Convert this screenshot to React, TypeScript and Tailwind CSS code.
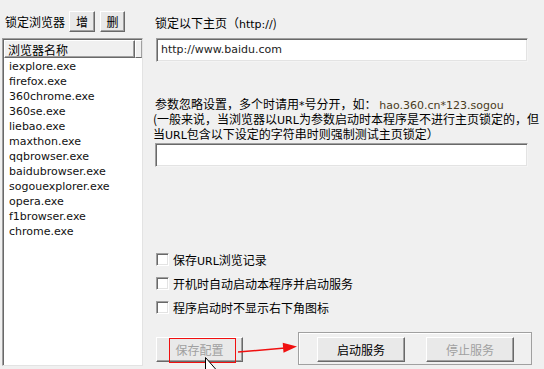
import React from "react";

const cjk = "font-['Noto_Sans_CJK_SC',sans-serif] text-[12px]";
const lat = "font-['DejaVu_Sans',sans-serif] text-[11px]";

function WinButton({
  children,
  className = "",
  disabled = false,
}: {
  children: React.ReactNode;
  className?: string;
  disabled?: boolean;
}) {
  return (
    <div
      className={
        "shrink-0 flex items-center justify-center bg-[#e9e9e9] border border-t-white border-l-white border-r-[#696969] border-b-[#696969] shadow-[inset_-1px_-1px_0_#a0a0a0] " +
        (disabled ? "text-[#a0a0a0] " : "text-black ") +
        className
      }
    >
      {children}
    </div>
  );
}

function CheckRow({ children }: { children: React.ReactNode }) {
  return (
    <div className="h-[24px] flex items-center">
      <div className="ml-[1px] w-[13px] h-[13px] bg-white border border-t-[#a0a0a0] border-l-[#a0a0a0] border-r-white border-b-white shadow-[inset_1px_1px_0_#696969,inset_-1px_-1px_0_#e3e3e3]" />
      <div className={"ml-[4px] h-[15px] leading-[15px] text-black whitespace-nowrap " + cjk}>{children}</div>
    </div>
  );
}

function TextBox({ children }: { children?: React.ReactNode }) {
  return (
    <div className="h-[24px] bg-white border border-t-[#a0a0a0] border-l-[#a0a0a0] border-r-[#f4f4f4] border-b-[#f4f4f4] shadow-[inset_1px_1px_0_#696969,inset_-1px_-1px_0_#e3e3e3] flex items-center pl-[4px]">
      {children}
    </div>
  );
}

const browsers = [
  "iexplore.exe",
  "firefox.exe",
  "360chrome.exe",
  "360se.exe",
  "liebao.exe",
  "maxthon.exe",
  "qqbrowser.exe",
  "baidubrowser.exe",
  "sogouexplorer.exe",
  "opera.exe",
  "f1browser.exe",
  "chrome.exe",
];

export default function App() {
  return (
    <div className="relative w-[544px] h-[369px] bg-[#f0f0f0] overflow-hidden flex text-black">
      {/* left column */}
      <div className="w-[143px] shrink-0 pl-[2px] pb-[3px] flex flex-col">
        <div className="h-[38px] flex items-start pt-[11px] pl-[3px]">
          <div className={"leading-[21px] h-[21px] " + cjk}>锁定浏览器</div>
          <WinButton className={"ml-[4px] w-[26px] h-[21px] " + cjk}>增</WinButton>
          <WinButton className={"ml-[5px] w-[25px] h-[21px] " + cjk}>删</WinButton>
        </div>
        <div className="flex-1 bg-white border border-t-[#a0a0a0] border-l-[#a0a0a0] border-r-[#e3e3e3] border-b-[#e3e3e3] shadow-[inset_1px_1px_0_#696969] pl-[1px] pt-[1px] flex flex-col">
          <div className="h-[18px] flex">
            <div className="w-[131px] h-full bg-[#f0f0f0] border border-t-white border-l-white border-r-[#696969] border-b-[#696969] shadow-[inset_-1px_-1px_0_#a0a0a0] flex items-center pl-[3px]">
              <span className={"leading-[15px] " + cjk}>浏览器名称</span>
            </div>
            <div className="flex-1 h-full bg-[#f0f0f0] border border-t-white border-l-white border-r-[#a0a0a0] border-b-[#696969]" />
          </div>
          <div className="pt-[1px] pl-[5px]">
            {browsers.map((b) => (
              <div key={b} className={"leading-[15px] h-[15px] text-[#111] " + lat}>
                {b}
              </div>
            ))}
          </div>
        </div>
      </div>

      {/* right column */}
      <div className="flex-1 min-w-0 pl-[12px] pr-[16px] pt-[15px] flex flex-col">
        <div className={"h-[15px] leading-[15px] whitespace-nowrap " + cjk}>
          锁定以下主页（<span className={lat}>http://</span>)
        </div>
        <div className="mt-[8px] ml-[1px]">
          <TextBox>
            <span className={"text-[#222] " + lat}>http://www.baidu.com</span>
          </TextBox>
        </div>
        <div className={"mt-[34px] whitespace-nowrap " + cjk}>
          <div className="h-[15px] leading-[15px]">
            参数忽略设置，多个时请用<span className={lat}>*</span>号分开，如：{" "}
            <span className={"text-[#4a3b22] " + lat}>hao.360.cn*123.sogou</span>
          </div>
          <div className="h-[15px] leading-[15px] -ml-[2px]">
            (一般来说，当浏览器以<span className={lat}>URL</span>为参数启动时本程序是不进行主页锁定的，但
          </div>
          <div className="h-[15px] leading-[15px] -ml-[2px]">
            当<span className={lat}>URL</span>包含以下设定的字符串时则强制测试主页锁定）
          </div>
        </div>
        <div className="mt-[2px]">
          <TextBox />
        </div>

        <div className="mt-[80px] flex flex-col">
          <CheckRow>
            保存<span className={lat}>URL</span>浏览记录
          </CheckRow>
          <CheckRow>开机时自动启动本程序并启动服务</CheckRow>
          <CheckRow>程序启动时不显示右下角图标</CheckRow>
        </div>

        <div className="mt-[13px] flex items-start">
          <WinButton disabled className={"mt-[5px] ml-[1px] w-[87px] h-[25px] " + cjk}>
            保存配置
          </WinButton>
          <div className="shrink-0 ml-[55px] w-[234px] h-[33px] border border-[#a0a0a0] shadow-[inset_1px_1px_0_#fff] flex items-start pl-[18px] pt-[4px]">
            <WinButton className={"w-[88px] h-[25px] " + cjk}>启动服务</WinButton>
            <WinButton disabled className={"ml-[21px] w-[88px] h-[25px] " + cjk}>
              停止服务
            </WinButton>
          </div>
        </div>
      </div>

      {/* annotations */}
      <div className="absolute left-[169px] top-[338px] w-[67px] h-[25px] border-[1.5px] border-[#f01010] pointer-events-none" />
      <svg
        className="absolute left-0 top-0 pointer-events-none"
        width="544"
        height="369"
        viewBox="0 0 544 369"
      >
        <line x1="238" y1="352" x2="285" y2="348" stroke="#f01010" strokeWidth="1.5" />
        <polygon points="297,346.5 283.5,352.7 282.7,342.7" fill="#f01010" />
        <path
          d="M205.5 357.5 L205.5 374 L209 370.5 L212 377 L214 376 L211 369.5 L216 369.5 Z"
          fill="#fff"
          stroke="#000"
          strokeWidth="1"
        />
      </svg>
    </div>
  );
}
